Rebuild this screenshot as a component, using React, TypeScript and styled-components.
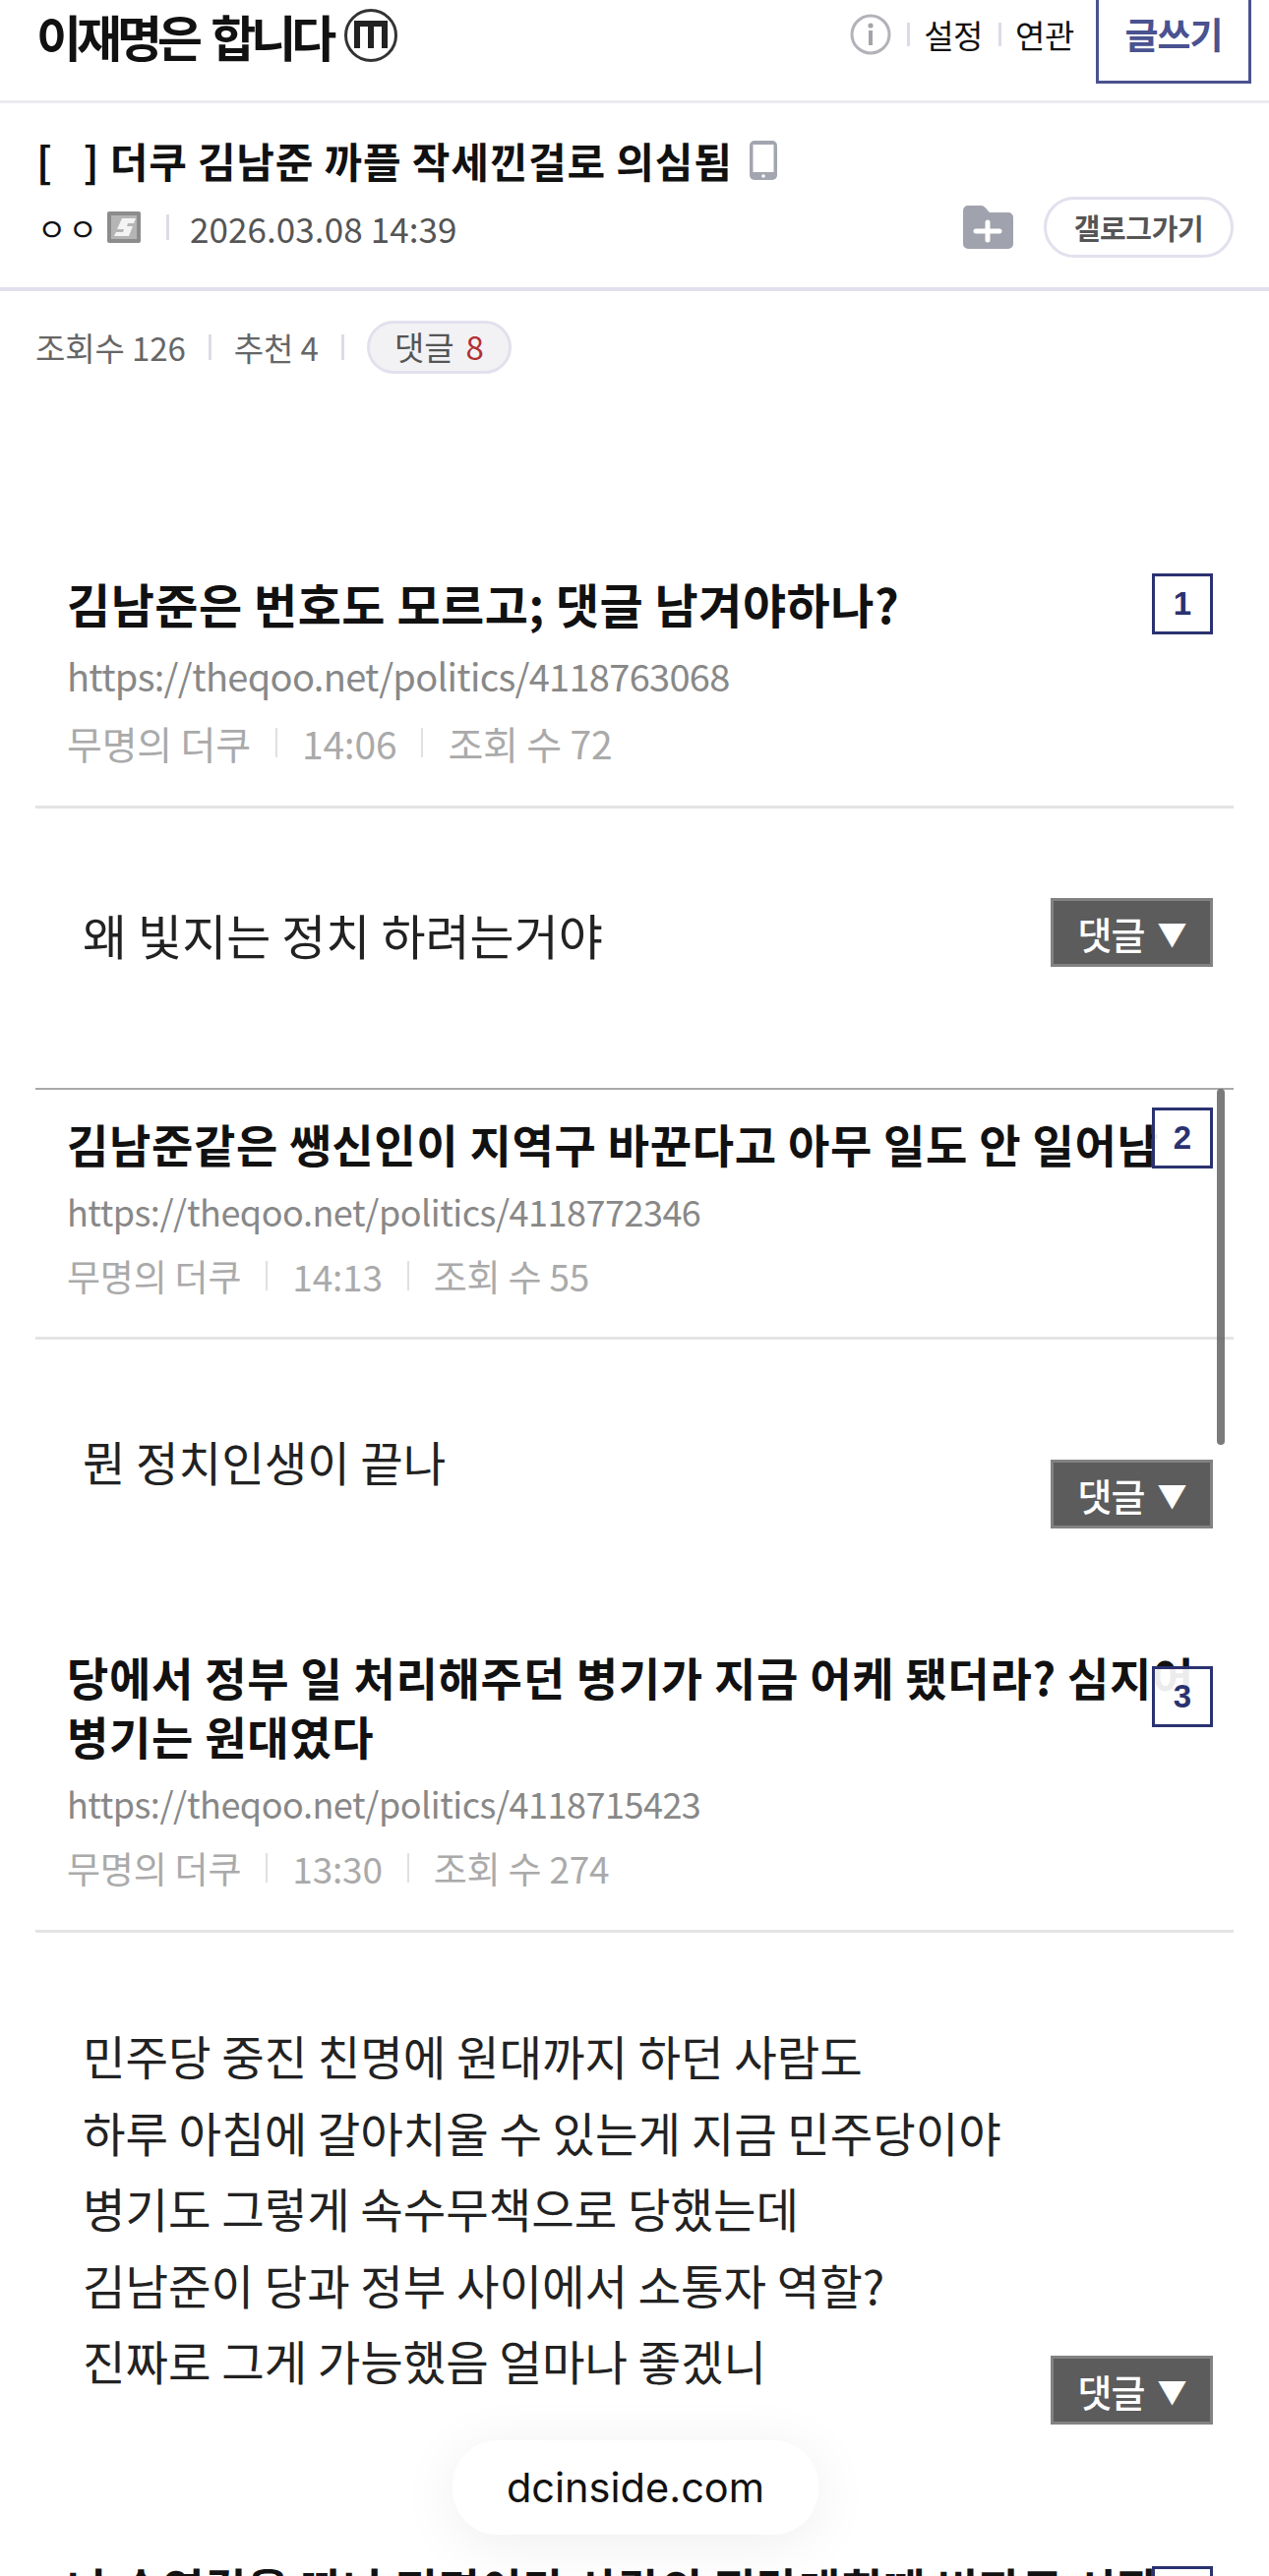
import React from 'react'
import styled, { createGlobalStyle } from 'styled-components'

const GlobalStyle = createGlobalStyle`
  html, body {
    margin: 0;
    padding: 0;
    background: #fff;
  }
  * {
    box-sizing: border-box;
  }
`

const Page = styled.div`
  position: relative;
  width: 1290px;
  height: 2619px;
  overflow: hidden;
  background: #fff;
  color: #111;
  font-family: 'Noto Sans CJK KR', 'Noto Sans', sans-serif;
`

const Header = styled.header`
  display: flex;
  justify-content: space-between;
  height: 105px;
  padding: 0 18px 0 37px;
  border-bottom: 3px solid #ececf0;
`

const GalleryName = styled.h1`
  display: flex;
  align-items: center;
  gap: 13px;
  height: 72px;
  margin: 0;
  font-size: 50px;
  font-weight: 700;
  letter-spacing: -5px;
  word-spacing: 7px;
  line-height: 1;
`

const HeaderMenu = styled.nav`
  display: flex;
  align-items: flex-start;
`

const MenuLink = styled.span`
  height: 70px;
  line-height: 70px;
  font-size: 33px;
  letter-spacing: -0.4px;
  color: #111;
`

const HeaderSep = styled.i`
  width: 3px;
  height: 24px;
  margin: 23px 14px 0 16px;
  background: #dcdce6;
`

const InfoWrap = styled.span`
  display: flex;
  align-items: center;
  height: 70px;
`

const WriteButton = styled.button`
  width: 158px;
  height: 85px;
  margin-left: 22px;
  padding: 0 0 14px;
  border: 3px solid #4a5290;
  border-top: none;
  background: #fff;
  color: #4a5290;
  font-family: inherit;
  font-size: 37px;
  font-weight: 700;
  letter-spacing: -1px;
`

const PostHead = styled.section`
  height: 191px;
  padding: 30px 36px 0 37px;
  border-bottom: 4px solid #e1e1ee;
`

const PostTitle = styled.h2`
  display: flex;
  align-items: center;
  gap: 17px;
  height: 56px;
  margin: 0;
  font-size: 42px;
  font-weight: 700;
  letter-spacing: 0.8px;
  line-height: 1;
  white-space: pre;
`

const PostInfo = styled.div`
  display: flex;
  align-items: center;
  height: 64px;
  margin-top: 8px;
`

const Writer = styled.span`
  font-size: 32px;
  letter-spacing: 2px;
  margin: 0 8px 0 1px;
`

const InfoSep = styled.i<{ $left?: number }>`
  width: 3px;
  height: 26px;
  margin-left: ${({ $left }) => $left ?? 0}px;
  background: #dcdce6;
`

const PostDate = styled.span`
  margin-left: 21px;
  font-size: 35px;
  letter-spacing: 0.1px;
  color: #555;
`

const PostActions = styled.div`
  display: flex;
  align-items: center;
  gap: 31px;
  margin-left: auto;
`

const GalleryLink = styled.button`
  width: 193px;
  height: 62px;
  padding: 0;
  border: 3px solid #e1e1ee;
  border-radius: 31px;
  background: #fff;
  color: #555;
  font-family: inherit;
  font-size: 29px;
  font-weight: 700;
  letter-spacing: -0.4px;
`

const StatsRow = styled.div`
  display: flex;
  align-items: center;
  gap: 23px;
  height: 113px;
  padding-left: 36px;
  font-size: 33px;
  letter-spacing: -0.1px;
  color: #666;
`

const CommentPill = styled.span`
  width: 147px;
  height: 54px;
  border: 3px solid #e1e1ee;
  border-radius: 27px;
  background: #f2f2f5;
  line-height: 46px;
  text-align: center;
  color: #555;
  em {
    margin-left: 12px;
    font-style: normal;
    color: #b03034;
  }
`

const Card = styled.article<{ $top: number }>`
  position: relative;
  padding: ${({ $top }) => $top}px 36px 0 68px;
`

const CardBadge = styled.span<{ $top: number; $h: number }>`
  position: absolute;
  top: ${({ $top }) => $top}px;
  right: 57px;
  width: 62px;
  height: ${({ $h }) => $h}px;
  border: 3px solid #2a3270;
  background: rgba(255, 255, 255, 0.92);
  color: #2a3270;
  font-family: 'Liberation Sans', sans-serif;
  font-size: 33px;
  font-weight: 700;
  line-height: ${({ $h }) => $h - 6}px;
  text-align: center;
`

const CardTitle = styled.h3<{ $large?: boolean }>`
  margin: 0;
  font-size: ${({ $large }) => ($large ? 48 : 46)}px;
  font-weight: 700;
  letter-spacing: ${({ $large }) => ($large ? 0.5 : 0.7)}px;
  line-height: 60px;
  white-space: pre;
`

const CardUrl = styled.div<{ $large?: boolean }>`
  margin-top: ${({ $large }) => ($large ? 20 : 15)}px;
  font-size: ${({ $large }) => ($large ? 38 : 36)}px;
  letter-spacing: ${({ $large }) => ($large ? -0.7 : -0.5)}px;
  line-height: 48px;
  color: #888;
`

const CardMeta = styled.div<{ $large?: boolean }>`
  display: flex;
  align-items: center;
  gap: 25px;
  height: 46px;
  margin-top: ${({ $large }) => ($large ? 21 : 19)}px;
  font-size: ${({ $large }) => ($large ? 39 : 37)}px;
  letter-spacing: -0.2px;
  color: #aaa;
`

const MetaSep = styled.i`
  width: 2px;
  height: 30px;
  background: #e0e0e0;
`

const Divider = styled.hr<{ $gap: number }>`
  height: 3px;
  margin: ${({ $gap }) => $gap}px 0 0 -32px;
  width: 1218px;
  border: none;
  background: #e4e4e4;
`

const CommentRow = styled.div<{ $height: number; $strong?: boolean }>`
  display: flex;
  justify-content: space-between;
  align-items: flex-start;
  height: ${({ $height }) => $height}px;
  margin: 0 36px;
  padding: 0 21px 0 48px;
  border-bottom: ${({ $strong }) => ($strong ? '2px solid #a9a9a9' : 'none')};
`

const CommentText = styled.p<{ $top: number; $large?: boolean }>`
  margin: ${({ $top }) => $top}px 0 0;
  font-size: ${({ $large }) => ($large ? 49 : 47.3)}px;
  line-height: 77.5px;
  color: #222;
  white-space: pre-line;
`

const ReplyButton = styled.button<{ $top: number }>`
  display: flex;
  align-items: center;
  justify-content: center;
  gap: 13px;
  width: 165px;
  height: 70px;
  margin-top: ${({ $top }) => $top}px;
  padding: 0;
  border: 3px solid #828282;
  background: #5c5c5c;
  color: #fff;
  font-family: inherit;
  font-size: 38px;
  font-weight: 500;
  letter-spacing: -1px;
  span {
    font-size: 30px;
  }
`

const Scrollbar = styled.div`
  position: absolute;
  top: 1107px;
  left: 1237px;
  width: 8px;
  height: 362px;
  border-radius: 4px;
  background: rgba(100, 100, 100, 0.85);
`

const DomainPill = styled.div`
  position: absolute;
  top: 2481px;
  left: 460px;
  width: 372px;
  height: 96px;
  border-radius: 46px;
  background: #fff;
  box-shadow: 0 8px 60px rgba(0, 0, 0, 0.07);
  font-family: Inter, 'Liberation Sans', sans-serif;
  font-size: 41.5px;
  line-height: 96px;
  text-align: center;
  color: #111;
`

function MobileMark() {
  return (
    <svg width="54" height="54" viewBox="0 0 54 54" aria-hidden="true">
      <circle cx="27" cy="27" r="25.5" fill="none" stroke="#333" strokeWidth="3" />
      <path d="M13 40V15h28v25M27 17v23" fill="none" stroke="#222" strokeWidth="6" />
    </svg>
  )
}

function InfoIcon() {
  return (
    <svg width="42" height="42" viewBox="0 0 42 42" aria-hidden="true">
      <circle cx="21" cy="21" r="19" fill="none" stroke="#b2b2b8" strokeWidth="3" />
      <circle cx="21" cy="12" r="2.6" fill="#a4a4aa" />
      <rect x="19" y="17" width="4" height="15" fill="#a4a4aa" />
    </svg>
  )
}

function PhoneIcon() {
  return (
    <svg width="28" height="40" viewBox="0 0 28 40" aria-hidden="true">
      <rect width="28" height="40" rx="5" fill="#a3a5b0" />
      <rect x="3.5" y="4" width="21" height="28" fill="#fff" />
      <circle cx="14" cy="36" r="1.8" fill="#fff" />
    </svg>
  )
}

function NikIcon() {
  return (
    <svg width="34" height="32" viewBox="0 0 34 32" aria-hidden="true">
      <rect width="34" height="32" rx="2" fill="#8c8c8c" />
      <rect x="4" y="4" width="26" height="24" fill="#b5b5b5" />
      <path d="M15 7h14l-2 5h-6l-1 3h6l-4 10H7l2-4h7l1-3h-7z" fill="#f4f4f4" />
    </svg>
  )
}

function FolderPlusIcon() {
  return (
    <svg width="51" height="44" viewBox="0 0 51 44" aria-hidden="true">
      <path d="M0 5a5 5 0 0 1 5-5h13c3 0 5 2 7 5l2 2h19a5 5 0 0 1 5 5v27a5 5 0 0 1-5 5H5a5 5 0 0 1-5-5z" fill="#a0a2ae" />
      <path d="M25 17v18M13 26h24" stroke="#fff" strokeWidth="5" strokeLinecap="round" />
    </svg>
  )
}

function App() {
  return (
    <Page>
      <GlobalStyle />
      <Header>
        <GalleryName>
          이재명은 합니다
          <MobileMark />
        </GalleryName>
        <HeaderMenu>
          <InfoWrap>
            <InfoIcon />
          </InfoWrap>
          <HeaderSep />
          <MenuLink>설정</MenuLink>
          <HeaderSep />
          <MenuLink>연관</MenuLink>
          <WriteButton>글쓰기</WriteButton>
        </HeaderMenu>
      </Header>

      <PostHead>
        <PostTitle>
          [   ] 더쿠 김남준 까플 작세낀걸로 의심됨
          <PhoneIcon />
        </PostTitle>
        <PostInfo>
          <Writer>ㅇㅇ</Writer>
          <NikIcon />
          <InfoSep $left={26} />
          <PostDate>2026.03.08 14:39</PostDate>
          <PostActions>
            <FolderPlusIcon />
            <GalleryLink>갤로그가기</GalleryLink>
          </PostActions>
        </PostInfo>
      </PostHead>

      <StatsRow>
        <span>조회수 126</span>
        <InfoSep />
        <span>추천 4</span>
        <InfoSep />
        <CommentPill>
          댓글<em>8</em>
        </CommentPill>
      </StatsRow>

      <Card $top={174}>
        <CardBadge $top={174} $h={62}>1</CardBadge>
        <CardTitle $large>김남준은 번호도 모르고; 댓글 남겨야하나?</CardTitle>
        <CardUrl $large>https://theqoo.net/politics/4118763068</CardUrl>
        <CardMeta $large>
          <span>무명의 더쿠</span>
          <MetaSep />
          <span>14:06</span>
          <MetaSep />
          <span>조회 수 72</span>
        </CardMeta>
        <Divider $gap={41} />
      </Card>
      <CommentRow $height={286} $strong>
        <CommentText $top={89} $large>왜 빛지는 정치 하려는거야</CommentText>
        <ReplyButton $top={91}>댓글 <span>▼</span></ReplyButton>
      </CommentRow>

      <Card $top={24}>
        <CardBadge $top={18} $h={62}>2</CardBadge>
        <CardTitle>김남준같은 쌩신인이 지역구 바꾼다고 아무 일도 안 일어남</CardTitle>
        <CardUrl>https://theqoo.net/politics/4118772346</CardUrl>
        <CardMeta>
          <span>무명의 더쿠</span>
          <MetaSep />
          <span>14:13</span>
          <MetaSep />
          <span>조회 수 55</span>
        </CardMeta>
        <Divider $gap={39} />
      </Card>
      <CommentRow $height={312}>
        <CommentText $top={85}>뭔 정치인생이 끝나</CommentText>
        <ReplyButton $top={122}>댓글 <span>▼</span></ReplyButton>
      </CommentRow>

      <Card $top={0}>
        <CardBadge $top={20} $h={62}>3</CardBadge>
        <CardTitle>{'당에서 정부 일 처리해주던 병기가 지금 어케 됐더라? 심지어\n병기는 원대였다'}</CardTitle>
        <CardUrl>https://theqoo.net/politics/4118715423</CardUrl>
        <CardMeta>
          <span>무명의 더쿠</span>
          <MetaSep />
          <span>13:30</span>
          <MetaSep />
          <span>조회 수 274</span>
        </CardMeta>
        <Divider $gap={40} />
      </Card>
      <CommentRow $height={635}>
        <CommentText $top={86}>
          {'민주당 중진 친명에 원대까지 하던 사람도\n하루 아침에 갈아치울 수 있는게 지금 민주당이야\n병기도 그렇게 속수무책으로 당했는데\n김남준이 당과 정부 사이에서 소통자 역할?\n진짜로 그게 가능했음 얼마나 좋겠니'}
        </CommentText>
        <ReplyButton $top={430}>댓글 <span>▼</span></ReplyButton>
      </CommentRow>

      <Card $top={0}>
        <CardBadge $top={9} $h={62}>4</CardBadge>
        <CardTitle>나 송영길을 따나 편명이라 사람의 전당대회때 비판도 시작</CardTitle>
      </Card>

      <Scrollbar />
      <DomainPill>dcinside.com</DomainPill>
    </Page>
  )
}

export default App
